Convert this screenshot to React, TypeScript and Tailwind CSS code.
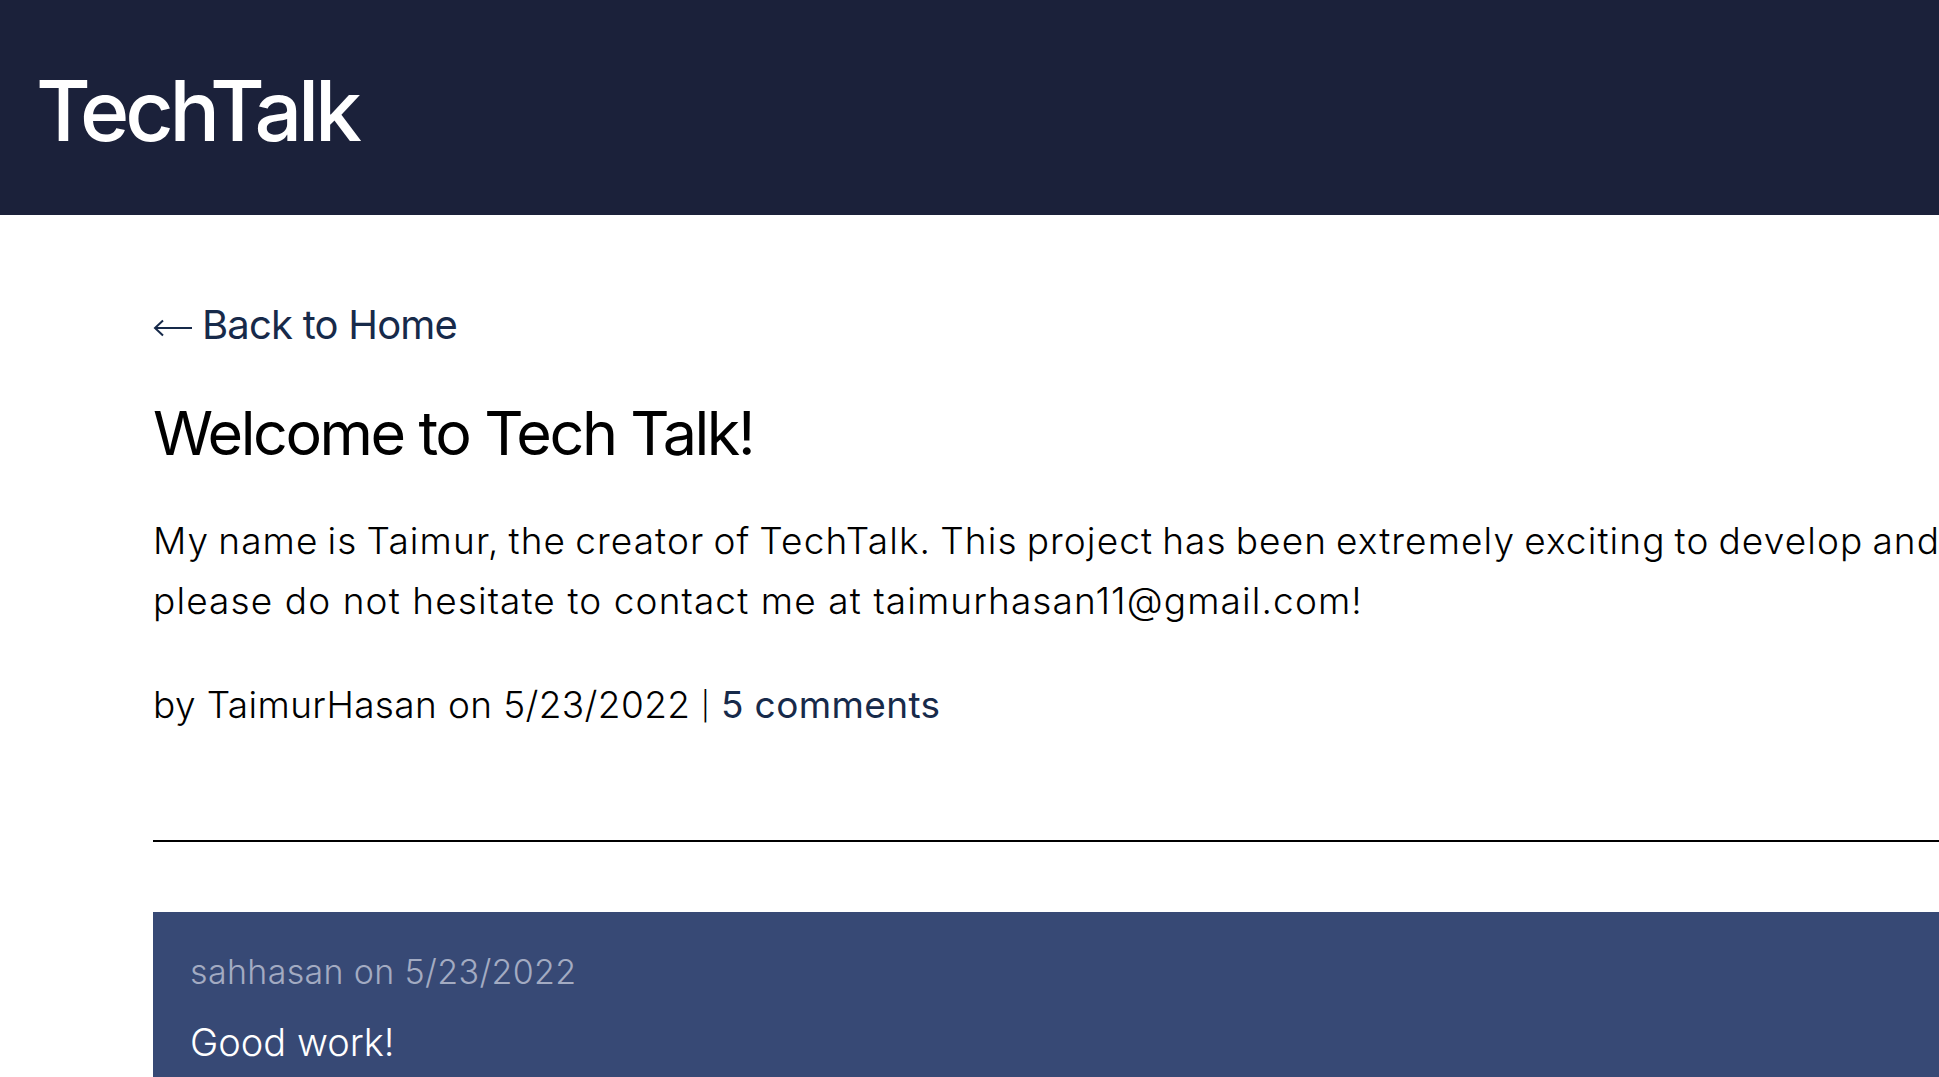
import React from "react";

export default function App() {
  return (
    <div
      className="w-full h-screen overflow-hidden bg-white"
      style={{ fontFamily: "Inter, 'Noto Sans', sans-serif" }}
    >
      <header className="h-[215px] bg-[#1b213a] flex items-center pl-[36px]">
        <h1 className="text-[84px] leading-none font-medium text-white tracking-[-0.05em] pt-[6px]">
          TechTalk
        </h1>
      </header>
      <main className="pl-[153px] w-[2100px]">
        <a
          href="#"
          className="mt-[86px] flex items-center h-[48px] text-[40px] leading-[48px] font-normal text-[#172a4a] tracking-[-0.02em]"
        >
          <svg width="40" height="20" viewBox="0 0 40 20" className="mr-[9px] mt-[6px]" fill="none">
            <path d="M2 10 H39" stroke="#172a4a" strokeWidth="2" />
            <path d="M10 2.5 L2 10 L10 17.5" stroke="#172a4a" strokeWidth="2" strokeLinejoin="miter" />
          </svg>
          <span>Back to Home</span>
        </a>
        <h2 className="mt-[48px] text-[61px] leading-[72px] font-normal text-black tracking-[-0.04em]">
          Welcome to Tech Talk!
        </h2>
        <p className="mt-[42px] text-[37px] leading-[60px] font-light text-black tracking-[0.03em]">
          <span className="block whitespace-nowrap [word-spacing:-2.5px]">
            My name is Taimur, the creator of TechTalk. This project has been extremely exciting to develop and
          </span>
          <span className="block whitespace-nowrap">
            please do not hesitate to contact me at taimurhasan11@gmail.com!
          </span>
        </p>
        <p className="mt-[50px] text-[37px] leading-[48px] font-light text-black tracking-[0.01em] whitespace-nowrap">
          by TaimurHasan on 5/23/2022 <span className="text-[28px] align-[2px]">|</span>{" "}
          <span className="font-normal text-[#172a4a]">5 comments</span>
        </p>
        <div className="mt-[110px] border-t-2 border-black" />
        <section className="mt-[70px] bg-[#374975] pl-[37px] pt-[36px] pb-[40px]">
          <p className="text-[34px] leading-[48px] font-light text-[#a3abc2] tracking-[0.01em]">
            sahhasan on 5/23/2022
          </p>
          <p className="mt-[22px] text-[38px] leading-[48px] font-light text-white tracking-[0em]">
            Good work!
          </p>
        </section>
      </main>
    </div>
  );
}
